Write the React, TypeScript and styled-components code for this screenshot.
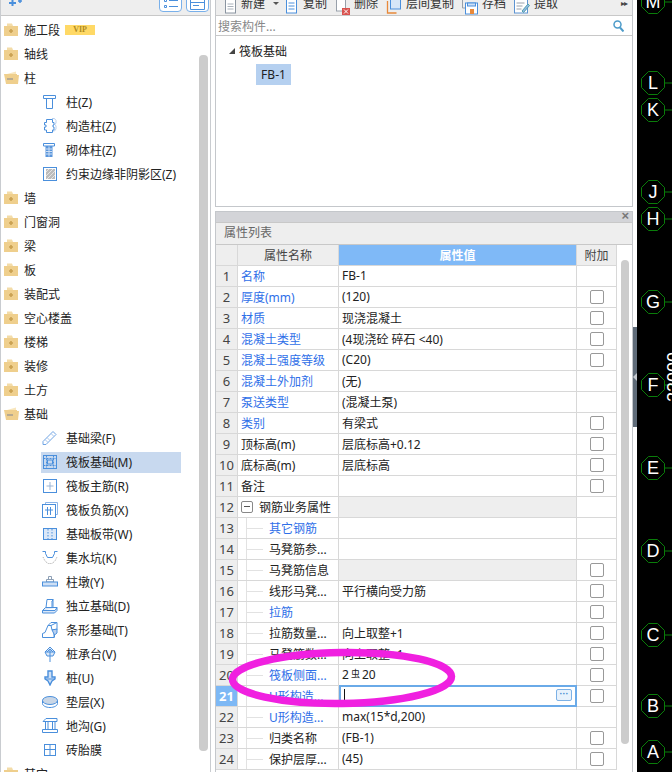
import { Fragment, type ReactNode } from 'react';
import styled, { createGlobalStyle } from 'styled-components';

const BLUE = '#4a8fdc';
const BORDER = '#d8d8d8';
const FONT = '"Noto Sans", "Noto Sans CJK SC", sans-serif';

const GlobalStyle = createGlobalStyle`
  html, body {
    margin: 0;
    height: 772px;
    overflow: hidden;
    background: #fff;
    font-family: ${FONT};
    font-size: 12px;
    color: #222;
  }
`;

const RebarMark = styled.span`
  font-size: 9px;
  margin: -3px 2px 0;
`;

/* ---------- icons ---------- */

const Svg = ({ children, w = 16, h = 16 }: { children: ReactNode; w?: number; h?: number }) => (
  <svg width={w} height={h} viewBox={`0 0 ${w} ${h}`} fill="none" stroke={BLUE} strokeWidth="1" style={{ flex: 'none' }}>
    {children}
  </svg>
);

const FolderClosed = () => (
  <Svg w={14} h={13}>
    <path d="M3 0.500h5l1 2.500H3z" fill="#f3dca8" stroke="none" />
    <rect x="0" y="3" width="14" height="10" fill="#efcf8d" stroke="none" />
    <path d="M5 8h4M7 6v4" stroke="#c9a050" strokeWidth="1.600" />
  </Svg>
);

const FolderOpen = () => (
  <Svg w={16} h={13}>
    <path d="M3 3l9-2.500V3z" fill="#f8e6bd" stroke="none" />
    <path d="M0 3h13v1h2l-1 9H2z" fill="#efcf8d" stroke="none" />
    <path d="M3 8h6" stroke="#a9a093" strokeWidth="1.600" />
  </Svg>
);

const icons: Record<string, ReactNode> = {
  column: (
    <Svg>
      <path d="M1.500 1.500h12v3h-12zM4.500 4.500h6v10h-6z" />
    </Svg>
  ),
  structural: (
    <Svg>
      <path d="M10 .5h2.500l1.500 2v2.500l-1 1.500 1 1.500v3l-1.500 2H10" stroke="#b7cfee" />
      <path d="M4.500 1.500h6v3h1.500v2.500h-1v2h1v3h-1.500v2.500h-6v-2.500H2.500v-3h1.500V7H2.500V4.500h2z" />
    </Svg>
  ),
  masonry: (
    <Svg>
      <path d="M1.500 1.500h11v2.500h-11z" />
      <rect x="3.500" y="4" width="7" height="11" fill="#5a96dc" stroke="none" />
      <path d="M4 7h6M4 9.500h6M4 12h6M7 4.500v10" stroke="#cfe0f5" />
    </Svg>
  ),
  hatch: (
    <Svg w={14} h={14}>
      <rect x=".5" y=".5" width="13" height="13" fill="#fff" />
      <rect x="3" y="2" width="9" height="10" fill="#bcbcbc" stroke="none" />
      <path d="M3 5l3-3M3 9l7-7M4 12l8-8M8 12l4-4" stroke="#e4e4e4" />
    </Svg>
  ),
  beam: (
    <Svg>
      <path d="M1 11.500L11 1.500l3 3-10 10H1z" stroke="#6fa4e4" />
      <path d="M3 9.500l3 3M5 7.500l3 3M9 3.500l3 3" stroke="#a9c7ee" />
    </Svg>
  ),
  raft: (
    <Svg w={14} h={14}>
      <rect x=".5" y=".5" width="13" height="13" />
      <path d="M.5 3.500h13M.5 10.500h13M3.500.5v13M10.500.5v13" strokeDasharray="2 1" />
      <rect x="4.500" y="5" width="5" height="4" />
    </Svg>
  ),
  mainBar: (
    <Svg w={14} h={14}>
      <rect x=".5" y=".5" width="13" height="13" />
      <path d="M7 3v8M3.500 7h7" stroke="#9ab5d6" />
    </Svg>
  ),
  negBar: (
    <Svg>
      <path d="M3.500 2.500V.5h12v12h-2" stroke="#8db5e8" />
      <rect x=".5" y="2.500" width="13" height="13" />
      <path d="M3 8h8M5.500 5v6M8.500 5v6M5.500 11v2M8.500 11v2" />
    </Svg>
  ),
  strip: (
    <Svg w={14} h={12}>
      <rect x=".5" y=".5" width="13" height="11" fill="#dbe8f8" />
      <path d="M5 1v10M9 1v10" strokeDasharray="1.500 1.500" />
    </Svg>
  ),
  pit: (
    <Svg>
      <path d="M.5 1.500h3v2l2 4h5l2-4v-2h3" />
      <path d="M1 7l2 4 3 2.500h4l3-2.500 2-4" stroke="#a8a8a8" strokeDasharray="1 1" />
    </Svg>
  ),
  pier: (
    <Svg w={16} h={11}>
      <path d="M6.500.5h3v3h-3zM4.500 3.500h7v2.500h-7z" stroke="#8d9fb5" />
      <rect x=".5" y="6" width="15" height="4" fill="#cfe0f5" />
    </Svg>
  ),
  isolated: (
    <Svg>
      <path d="M5 1.500h6l-1 2v6H4z" fill="#fff" />
      <path d="M10 3.500l1-2v7l-1 1" />
      <path d="M.5 12.500l3-3h11.500v3l-2.500 2.500H.5zM.5 12.500h12.500l2-3" fill="#dbe8f8" />
    </Svg>
  ),
  stripFound: (
    <Svg>
      <path d="M.5 15.500v-4l2.500-1 3-7 3-3h6v7l-3 2v6zM6 3.500h3L15 .5M9 3.500l1 4.500 2.500-.5v8" />
      <path d="M10 8l5-1v4l-2.500 2z" fill="#b7d0f0" />
    </Svg>
  ),
  cap: (
    <Svg>
      <path d="M8 1l5 5-2 4H5L3 6z" fill="#dbe8f8" />
      <path d="M5 6l3-3 3 3M8 3v13M3.500 6H13" />
    </Svg>
  ),
  pile: (
    <Svg>
      <path d="M6 1h4v6h3v2l-3 2-2 4-2-4-3-2V7h3z" fill="#cfe0f5" strokeWidth="1.400" />
      <path d="M3 9h10" />
    </Svg>
  ),
  cushion: (
    <Svg w={16} h={12}>
      <ellipse cx="8" cy="4.500" rx="7.500" ry="4" fill="#c9d6e6" />
      <path d="M.5 4.500v3c0 2.200 3.400 4 7.500 4s7.500-1.800 7.500-4v-3" fill="none" />
    </Svg>
  ),
  trench: (
    <Svg>
      <path d="M1 3.500h14V.5M1 3.500L4 .5h11M.5 14.500h15M.5 11.500v3M15.500 11.500v3M.5 11.500h15" />
      <path d="M3.500 3.500v8M6 3.500v8M10.500 3.500v8M13 3.500v8" />
    </Svg>
  ),
  brick: (
    <Svg w={12} h={12}>
      <rect x=".5" y=".5" width="11" height="11" />
      <path d="M6 .5v11M.5 5.500h11" />
    </Svg>
  )
};

const toolIcons: Record<string, ReactNode> = {
  create: (
    <Svg w={13} h={15}>
      <rect x="1.500" y="-3" width="10" height="16" stroke="#8a94a0" fill="#fff" />
      <path d="M3.500 4h6M3.500 6.500h6M3.500 9h6" stroke="#a8b0ba" />
    </Svg>
  ),
  copy: (
    <Svg w={14} h={15}>
      <rect x="1.500" y="-3" width="10" height="16" fill="#fff" />
      <path d="M3.500 3h6M3.500 6h6M3.500 9h6" />
    </Svg>
  ),
  del: (
    <Svg w={15} h={15}>
      <rect x="1.500" y="-3" width="9" height="14" stroke="#98a0aa" fill="#fff" />
      <rect x="7" y="8" width="8" height="7" fill="#d9534f" stroke="none" />
      <path d="M9 9.500l4 4M13 9.500l-4 4" stroke="#fff" />
    </Svg>
  ),
  floor: (
    <Svg w={16} h={15}>
      <rect x="4.500" y="-3" width="10" height="12" fill="#d6e6f8" />
      <path d="M1.500 1v12h9" stroke="#e8893a" strokeWidth="1.300" />
    </Svg>
  ),
  save: (
    <Svg w={16} h={15}>
      <path d="M.5 0v8h3" stroke="#98a0aa" />
      <rect x="3.500" y="3" width="12" height="11" fill="#fff" />
      <rect x="5.500" y="3" width="8" height="3" fill="#cfe0f5" />
      <rect x="8" y="9" width="4" height="5" fill="#e8893a" stroke="none" />
    </Svg>
  ),
  pick: (
    <Svg w={16} h={15}>
      <rect x=".5" y="-2" width="13" height="15" stroke="#5c93d2" fill="#fff" />
      <path d="M2.500 3h8M2.500 6h6M2.500 9h5" stroke="#98a0aa" />
      <path d="M8 11l6-7 1.500 1.500-6 7z" fill="#8fb8e8" stroke="#55a0a8" />
    </Svg>
  )
};

/* ---------- data ---------- */

type TreeItem = { label: string; open?: boolean; vip?: boolean; children?: { icon: string; label: string; active?: boolean }[] };

const tree: TreeItem[] = [
  { label: '施工段', vip: true },
  { label: '轴线' },
  {
    label: '柱',
    open: true,
    children: [
      { icon: 'column', label: '柱(Z)' },
      { icon: 'structural', label: '构造柱(Z)' },
      { icon: 'masonry', label: '砌体柱(Z)' },
      { icon: 'hatch', label: '约束边缘非阴影区(Z)' }
    ]
  },
  { label: '墙' },
  { label: '门窗洞' },
  { label: '梁' },
  { label: '板' },
  { label: '装配式' },
  { label: '空心楼盖' },
  { label: '楼梯' },
  { label: '装修' },
  { label: '土方' },
  {
    label: '基础',
    open: true,
    children: [
      { icon: 'beam', label: '基础梁(F)' },
      { icon: 'raft', label: '筏板基础(M)', active: true },
      { icon: 'mainBar', label: '筏板主筋(R)' },
      { icon: 'negBar', label: '筏板负筋(X)' },
      { icon: 'strip', label: '基础板带(W)' },
      { icon: 'pit', label: '集水坑(K)' },
      { icon: 'pier', label: '柱墩(Y)' },
      { icon: 'isolated', label: '独立基础(D)' },
      { icon: 'stripFound', label: '条形基础(T)' },
      { icon: 'cap', label: '桩承台(V)' },
      { icon: 'pile', label: '桩(U)' },
      { icon: 'cushion', label: '垫层(X)' },
      { icon: 'trench', label: '地沟(G)' },
      { icon: 'brick', label: '砖胎膜' }
    ]
  },
  { label: '其它' }
];

type Prop = {
  name: string;
  value?: ReactNode;
  blue?: boolean;
  check?: boolean;
  group?: boolean;
  nested?: boolean;
  shaded?: boolean;
  editing?: boolean;
};

const props: Prop[] = [
  { name: '名称', value: 'FB-1', blue: true },
  { name: '厚度(mm)', value: '(120)', blue: true, check: true },
  { name: '材质', value: '现浇混凝土', blue: true, check: true },
  { name: '混凝土类型', value: '(4现浇砼 碎石 <40)', blue: true, check: true },
  { name: '混凝土强度等级', value: '(C20)', blue: true, check: true },
  { name: '混凝土外加剂', value: '(无)', blue: true },
  { name: '泵送类型', value: '(混凝土泵)', blue: true },
  { name: '类别', value: '有梁式', blue: true, check: true },
  { name: '顶标高(m)', value: '层底标高+0.12', check: true },
  { name: '底标高(m)', value: '层底标高', check: true },
  { name: '备注', check: true },
  { name: '钢筋业务属性', group: true, shaded: true },
  { name: '其它钢筋', nested: true, blue: true },
  { name: '马凳筋参...', nested: true },
  { name: '马凳筋信息', nested: true, shaded: true, check: true },
  { name: '线形马凳...', value: '平行横向受力筋', nested: true, check: true },
  { name: '拉筋', nested: true, blue: true, check: true },
  { name: '拉筋数量...', value: '向上取整+1', nested: true, check: true },
  { name: '马凳筋数...', value: '向上取整+1', nested: true, check: true },
  {
    name: '筏板侧面...',
    value: (
      <>
        2<RebarMark>虫</RebarMark>20
      </>
    ),
    nested: true,
    blue: true,
    check: true
  },
  { name: 'U形构造...', nested: true, blue: true, check: true, editing: true },
  { name: 'U形构造...', value: 'max(15*d,200)', nested: true, blue: true },
  { name: '归类名称', value: '(FB-1)', nested: true, check: true },
  { name: '保护层厚...', value: '(45)', nested: true, check: true }
];

const axes = [
  { label: 'M', y: 2 },
  { label: 'L', y: 83 },
  { label: 'K', y: 110 },
  { label: 'J', y: 192 },
  { label: 'H', y: 219 },
  { label: 'G', y: 302 },
  { label: 'F', y: 385 },
  { label: 'E', y: 468 },
  { label: 'D', y: 551 },
  { label: 'C', y: 635 },
  { label: 'B', y: 706 },
  { label: 'A', y: 752 }
];

const tools = [
  { icon: 'create', label: '新建', caret: true },
  { icon: 'copy', label: '复制' },
  { icon: 'del', label: '删除' },
  { icon: 'floor', label: '层间复制' },
  { icon: 'save', label: '存档' },
  { icon: 'pick', label: '提取' }
];

/* ---------- page ---------- */

export default function App() {
  return (
    <Page>
      <GlobalStyle />
      <LeftPanel>
        <LeftBar>
          <AddIcon width="14" height="7" viewBox="0 0 14 7">
            <path d="M1 3h7M4.500 0v6" stroke={BLUE} strokeWidth="2" />
            <path d="M10 1h4M12 -1v4" stroke={BLUE} strokeWidth="1.500" />
          </AddIcon>
          <BarButtons>
            <BarButton>
              <svg width="14" height="12" viewBox="0 0 14 12" fill="none" stroke={BLUE}>
                <path d="M.5 1.500h2v2h-2zM.5 7.500h2v2h-2zM5 2.500h9M5 8.500h9" />
              </svg>
            </BarButton>
            <BarButton>
              <svg width="15" height="12" viewBox="0 0 15 12" fill="none" stroke={BLUE}>
                <path d="M.5 .5h14v11H.5zM.5 4.500h14M3 7.500h6" />
              </svg>
            </BarButton>
          </BarButtons>
        </LeftBar>
        <Tree>
          {tree.map(item => (
            <Fragment key={item.label}>
              <FolderRow>
                <FolderSlot>{item.open ? <FolderOpen /> : <FolderClosed />}</FolderSlot>
                {item.label}
                {item.vip && <Vip>VIP</Vip>}
              </FolderRow>
              {item.children?.map(child => (
                <ChildRow key={child.label}>
                  <ChildInner $active={child.active}>
                    <ChildIcon>{icons[child.icon]}</ChildIcon>
                    {child.label}
                  </ChildInner>
                </ChildRow>
              ))}
            </Fragment>
          ))}
        </Tree>
        <TreeScroll />
      </LeftPanel>

      <RightPanel>
        <TopSection>
          <Toolbar>
            {tools.map(tool => (
              <Tool key={tool.label}>
                {toolIcons[tool.icon]}
                <span>{tool.label}</span>
                {tool.caret && <Caret />}
              </Tool>
            ))}
            <More>▸▸</More>
          </Toolbar>
          <Search>
            搜索构件...
            <svg width="11" height="12" viewBox="0 0 11 12" fill="none" stroke="#4d9bc9" strokeWidth="1.500">
              <circle cx="4.500" cy="4.500" r="3.500" />
              <path d="M7 7.500l3.500 4" strokeWidth="2" />
            </svg>
          </Search>
          <ComponentTree>
            <TreeHead>
              <Arrow />
              筏板基础
            </TreeHead>
            <Chip>FB-1</Chip>
          </ComponentTree>
        </TopSection>

        <PropsSection>
          <PropsBar>
            <CloseMark>×</CloseMark>
          </PropsBar>
          <PropsTitle>属性列表</PropsTitle>
          <HeadRow>
            <NumCell />
            <HeadCell>属性名称</HeadCell>
            <HeadCell $accent>属性值</HeadCell>
            <HeadCell>附加</HeadCell>
          </HeadRow>
          {props.map((row, i) => (
            <Row key={i}>
              <NumCell $active={row.editing}>{i + 1}</NumCell>
              <NameCell $blue={row.blue} $nested={row.nested}>
                {row.nested && <Branch />}
                {row.group && <Collapse />}
                {row.name}
              </NameCell>
              <ValueCell $shaded={row.shaded} $editing={row.editing}>
                {row.editing ? (
                  <>
                    <TextCursor />
                    <MoreButton>···</MoreButton>
                  </>
                ) : (
                  row.value
                )}
              </ValueCell>
              <AddCell>{row.check && <Check />}</AddCell>
            </Row>
          ))}
          <PropsScroll />
        </PropsSection>
      </RightPanel>

      <Splitter>
        <Handle />
      </Splitter>

      <Canvas>
        {axes.map(axis => (
          <Axis key={axis.label} $y={axis.y}>
            <svg width="35" height="26" viewBox="0 0 35 26" fill="none" stroke="#0a7d0a">
              <path d="M11.500 1.500h9l7 7v9l-7 7h-9l-7-7v-9z" fill="#000" />
              <path d="M27.500 13H35" />
            </svg>
            <AxisLabel>{axis.label}</AxisLabel>
          </Axis>
        ))}
        <Dimension>23000</Dimension>
      </Canvas>

      <Marker width="240" height="72" viewBox="0 0 240 72" fill="none">
        <ellipse cx="120" cy="36" rx="109.500" ry="25.500" stroke="#f020e0" strokeWidth="7.500" transform="rotate(-0.800 120 36)" />
      </Marker>
    </Page>
  );
}

const Page = styled.div`
  display: flex;
  width: 672px;
  height: 772px;
  overflow: hidden;
  position: relative;
`;

/* left tree */

const LeftPanel = styled.aside`
  position: relative;
  width: 211px;
  flex: none;
  box-sizing: border-box;
  border-left: 1px solid #c9ccd0;
  border-right: 1px solid #c9ccd0;
  margin-right: 4px;
  overflow: hidden;
`;

const LeftBar = styled.div`
  display: flex;
  justify-content: space-between;
  align-items: flex-start;
  height: 15px;
  box-sizing: content-box;
  background: #eee;
  border-bottom: 1px solid #c8c8c8;
  padding: 0 1px 0 7px;
  overflow: hidden;
`;

const AddIcon = styled.svg`
  display: block;
`;

const BarButtons = styled.div`
  display: flex;
  gap: 4px;
  margin-top: -5px;
`;

const BarButton = styled.div`
  width: 23px;
  height: 17px;
  box-sizing: border-box;
  border: 1px solid #79b0ea;
  border-radius: 4px;
  background: #fff;
  display: flex;
  align-items: center;
  justify-content: center;
`;

const Tree = styled.div`
  padding-top: 2px;
`;

const FolderRow = styled.div`
  display: flex;
  align-items: center;
  height: 23px;
  padding: 0 0 1px 3px;
`;

const FolderSlot = styled.span`
  display: flex;
  width: 20px;
  flex: none;
`;

const Vip = styled.span`
  margin-left: 5px;
  width: 30px;
  height: 10px;
  background: #ffd966;
  color: #b08a20;
  font: bold 8px/10px "Liberation Serif", serif;
  text-align: center;
`;

const ChildRow = styled.div`
  display: flex;
  align-items: center;
  height: 24px;
  padding-left: 40px;
`;

const ChildInner = styled.div<{ $active?: boolean }>`
  display: flex;
  align-items: center;
  box-sizing: border-box;
  width: 140px;
  height: 21px;
  padding-bottom: 1px;
  background: ${p => (p.$active ? '#c8d9ef' : 'transparent')};
  white-space: nowrap;
`;

const ChildIcon = styled.span`
  display: flex;
  justify-content: center;
  width: 18px;
  margin: 0 7px 0 0;
  flex: none;
`;

const TreeScroll = styled.div`
  position: absolute;
  left: 198px;
  top: 55px;
  width: 9px;
  height: 696px;
  border-radius: 4px;
  background: #ccc;
`;

/* right side */

const RightPanel = styled.main`
  width: 418px;
  flex: none;
  display: flex;
  flex-direction: column;
  gap: 4px;
`;

const TopSection = styled.section`
  box-sizing: border-box;
  height: 207px;
  flex: none;
  border: solid #c4c7cb;
  border-width: 0 1px 1px;
  display: flex;
  flex-direction: column;
`;

const Toolbar = styled.div`
  position: relative;
  display: flex;
  align-items: flex-end;
  gap: 8px;
  height: 15px;
  flex: none;
  padding-left: 8px;
  background: #eee;
  border-bottom: 1px solid #c8c8c8;
  overflow: hidden;
`;

const Tool = styled.div`
  display: flex;
  align-items: center;
  gap: 4px;
  height: 24px;
  white-space: nowrap;
  color: #333;

  svg {
    align-self: flex-end;
  }
`;

const Caret = styled.i`
  margin-left: 4px;
  margin-right: -2px;
  border: 3px solid transparent;
  border-top: 3px solid #555;
  border-bottom: 0;
`;

const More = styled.span`
  position: absolute;
  right: 5px;
  top: -3px;
  font-size: 8px;
  letter-spacing: -1px;
  color: #444;
`;

const Search = styled.div`
  display: flex;
  align-items: center;
  justify-content: space-between;
  height: 19px;
  flex: none;
  padding: 0 8px 0 2px;
  color: #888;
  border-bottom: 1px solid #c8c8c8;
`;

const ComponentTree = styled.div`
  flex: 1;
  padding: 5px 0 0 13px;
`;

const TreeHead = styled.div`
  display: flex;
  align-items: center;
  height: 20px;
`;

const Arrow = styled.i`
  width: 0;
  height: 0;
  margin-right: 4px;
  border-style: solid;
  border-width: 0 0 6px 6px;
  border-color: transparent transparent #444 transparent;
`;

const Chip = styled.div`
  width: 35px;
  height: 21px;
  margin: 3px 0 0 27px;
  background: #b5d0f0;
  line-height: 21px;
  text-align: center;
`;

const PropsSection = styled.section`
  position: relative;
  flex: 1;
  min-height: 0;
  border: solid #c4c7cb;
  border-width: 1px 1px 0;
  overflow: hidden;
`;

const PropsBar = styled.div`
  position: relative;
  height: 10px;
  background: #d3d4d8;
  border-bottom: 1px solid #c8c8c8;
`;

const CloseMark = styled.span`
  position: absolute;
  right: 3px;
  top: -3px;
  font: bold 13px/14px "Liberation Sans", sans-serif;
  color: #777;
`;

const PropsTitle = styled.div`
  height: 21px;
  line-height: 20px;
  padding-left: 8px;
  background: #eee;
  border-bottom: 1px solid #c8c8c8;
  color: #666;
`;

const gridColumns = `
  display: grid;
  grid-template-columns: 22px 101px 238px 40px;
  height: 21px;
`;

const HeadRow = styled.div`
  ${gridColumns}
`;

const Row = styled.div`
  ${gridColumns}
`;

const cell = `
  box-sizing: border-box;
  display: flex;
  align-items: center;
  padding-bottom: 1px;
  border-right: 1px solid ${BORDER};
  border-bottom: 1px solid ${BORDER};
  white-space: nowrap;
  overflow: hidden;
`;

const NumCell = styled.div<{ $active?: boolean }>`
  ${cell}
  justify-content: center;
  background: ${p => (p.$active ? '#7db8f5' : '#eee')};
  color: ${p => (p.$active ? '#fff' : '#444')};
  font-weight: ${p => (p.$active ? 700 : 400)};
  font-size: 13px;
`;

const HeadCell = styled.div<{ $accent?: boolean }>`
  ${cell}
  justify-content: center;
  background: ${p => (p.$accent ? '#7fb9f7' : '#eee')};
  color: ${p => (p.$accent ? '#fff' : '#444')};
  font-weight: ${p => (p.$accent ? 700 : 400)};
`;

const NameCell = styled.div<{ $blue?: boolean; $nested?: boolean }>`
  ${cell}
  position: relative;
  padding-left: ${p => (p.$nested ? '31px' : '3px')};
  color: ${p => (p.$blue ? '#2f6fe8' : '#222')};
`;

const Branch = styled.i`
  position: absolute;
  left: 8px;
  top: 0;
  bottom: -1px;
  width: 16px;
  border-left: 1px solid #e2e2e2;

  &::after {
    content: '';
    position: absolute;
    left: 0;
    right: 0;
    top: 10px;
    border-top: 1px solid #e2e2e2;
  }
`;

const Collapse = styled.i`
  position: relative;
  width: 12px;
  height: 12px;
  margin-right: 6px;
  flex: none;
  box-sizing: border-box;
  border: 1px solid #888;
  border-radius: 2px;

  &::after {
    content: '';
    position: absolute;
    left: 2px;
    right: 2px;
    top: 4px;
    border-top: 1px solid #555;
  }
`;

const ValueCell = styled.div<{ $shaded?: boolean; $editing?: boolean }>`
  ${cell}
  position: relative;
  padding-left: 3px;
  background: ${p => (p.$shaded ? '#eee' : '#fff')};
  ${p => p.$editing && `border: 2px solid #6aaae8; padding-left: 3px; margin-top: -1px; height: 22px;`}
`;

const TextCursor = styled.i`
  width: 1px;
  height: 13px;
  background: #111;
`;

const MoreButton = styled.span`
  position: absolute;
  right: 3px;
  top: 2px;
  width: 16px;
  height: 12px;
  box-sizing: border-box;
  border: 1px solid #7cb1e6;
  border-radius: 2px;
  background: #e8f2fc;
  color: #3f86d0;
  font: bold 9px/9px "Liberation Sans", sans-serif;
  text-align: center;
`;

const AddCell = styled.div`
  ${cell}
  justify-content: center;
  padding-bottom: 0;
`;

const Check = styled.i`
  width: 14px;
  height: 14px;
  box-sizing: border-box;
  border: 1px solid #999;
  border-radius: 2px;
  background: #fff;
`;

const PropsScroll = styled.div`
  position: absolute;
  left: 405px;
  top: 48px;
  width: 8px;
  height: 484px;
  border-radius: 4px;
  background: #ccc;
`;

const Splitter = styled.div`
  width: 4px;
  flex: none;
  display: flex;
  align-items: flex-start;
`;

const Handle = styled.div`
  position: relative;
  width: 4px;
  height: 100px;
  margin-top: 327px;
  background: #5f6b78;

  &::after {
    content: '';
    position: absolute;
    left: 0;
    top: 46px;
    border-style: solid;
    border-width: 4px 4px 4px 0;
    border-color: transparent #c4c9cf transparent transparent;
  }
`;

const Canvas = styled.div`
  position: relative;
  flex: 1;
  background: #000;
  overflow: hidden;
`;

const Axis = styled.div<{ $y: number }>`
  position: absolute;
  left: 0;
  top: ${p => p.$y - 13}px;
  width: 35px;
  height: 26px;

  svg {
    display: block;
  }
`;

const AxisLabel = styled.span`
  position: absolute;
  left: 4px;
  top: 0;
  width: 24px;
  color: #fff;
  font: 18px/26px "Liberation Sans", sans-serif;
  text-align: center;
`;

const Dimension = styled.span`
  position: absolute;
  left: 28px;
  top: 352px;
  writing-mode: vertical-rl;
  transform: rotate(180deg);
  color: #fff;
  font: 18px/18px "Liberation Sans", sans-serif;
`;

const Marker = styled.svg`
  position: absolute;
  left: 222px;
  top: 642px;
  pointer-events: none;
`;
